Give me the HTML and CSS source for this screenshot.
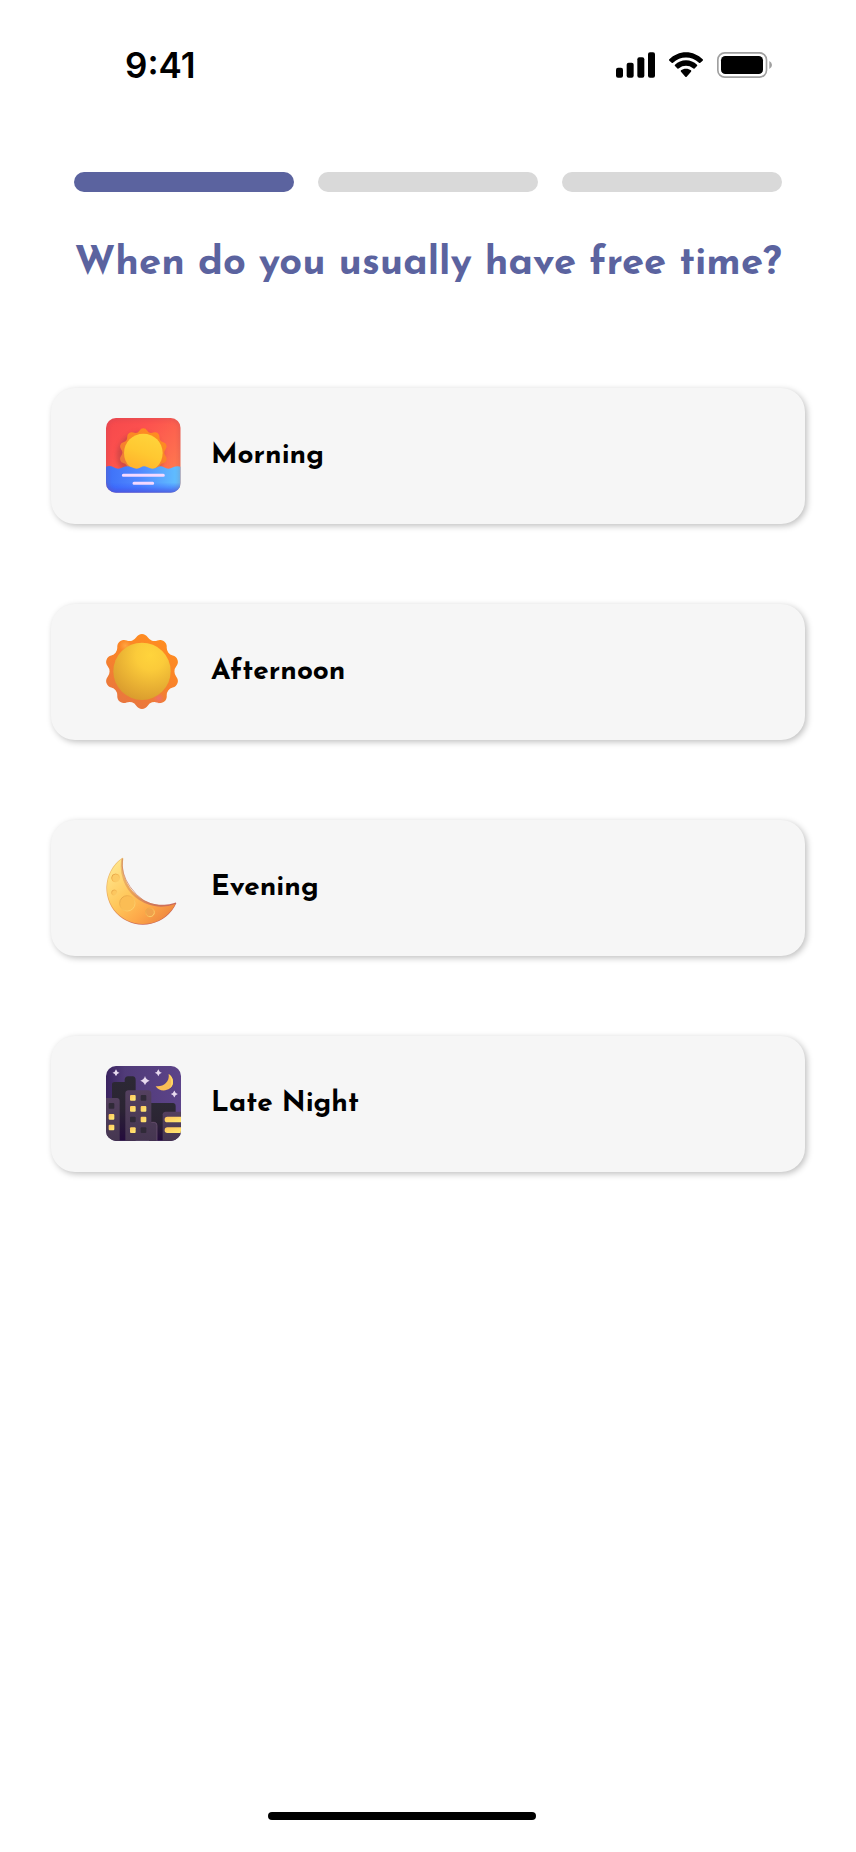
FILE: index.html
```html
<!DOCTYPE html>
<html lang="en">
<head>
<meta charset="utf-8">
<meta name="viewport" content="width=device-width, initial-scale=1">
<title>Free time</title>
<link rel="stylesheet" href="styles.css">
</head>
<body>
<div class="screen">
  <header class="status">
    <time class="clock">9:41</time>
    <div class="indicators">
      <svg class="signal" viewBox="78 66 117 78" aria-hidden="true">
        <rect x="78" y="113" width="21" height="30" rx="6"/>
        <rect x="110" y="98" width="21" height="45" rx="6"/>
        <rect x="142" y="82" width="21" height="61" rx="6"/>
        <rect x="174" y="67" width="21" height="76" rx="6"/>
      </svg>
      <svg class="wifi" viewBox="237 66 102 78" aria-hidden="true">
        <path d="M288 67C307 67 325 75 338 88Q340 90 338 92L331 98Q329 100 327 98C305 77 271 77 249 98Q247 100 245 98L238 92Q236 90 238 88C251 75 269 67 288 67Z"/>
        <path d="M288 91C301 91 312 96 321 104Q323 106 321 108L313 116Q311 117 309 115C297 105 279 105 267 115Q265 117 263 116L255 108Q253 106 255 104C264 96 275 91 288 91Z"/>
        <path d="M288 116C294 116 299 118 303 121Q305 123 303 125L290 140Q288 142 286 140L273 125Q271 123 273 121C277 118 282 116 288 116Z"/>
      </svg>
      <svg class="battery" viewBox="381 66 165 78" aria-hidden="true">
        <rect x="383.500" y="68.500" width="146" height="73" rx="21" fill="none" stroke="#a0a0a0" stroke-width="5"/>
        <rect x="393" y="78" width="126" height="54" rx="13"/>
        <path d="M538 93Q546 97 546 105T538 117Z" fill="#a0a0a0"/>
      </svg>
    </div>
  </header>

  <main class="content">
    <ol class="progress" aria-label="Step 1 of 3">
      <li class="step step-done"></li>
      <li class="step"></li>
      <li class="step"></li>
    </ol>
    <h1 class="title">When do you usually have free time?</h1>

    <div class="options">
      <button class="option" type="button">
        <svg class="icon" viewBox="47 54 225 225" aria-hidden="true">
          <defs>
            <linearGradient id="sky" x1="0" y1="0" x2="1" y2="1"><stop offset="0" stop-color="#f5484c"/><stop offset=".3" stop-color="#fc504e"/><stop offset="1" stop-color="#ff8750"/></linearGradient>
            <linearGradient id="sea" x1="0" y1="0" x2="1" y2="0"><stop offset="0" stop-color="#3d70f8"/><stop offset=".45" stop-color="#5088ff"/><stop offset="1" stop-color="#62c4ff"/></linearGradient>
            <linearGradient id="seaDepth" x1="0" y1="0" x2="0" y2="1"><stop offset=".6" stop-color="#3558ff" stop-opacity="0"/><stop offset="1" stop-color="#3558ff" stop-opacity=".8"/></linearGradient>
            <linearGradient id="dawnDisc" x1=".7" y1="0" x2=".3" y2="1"><stop offset="0" stop-color="#ffd43b"/><stop offset=".5" stop-color="#ffc831"/><stop offset="1" stop-color="#ffae2b"/></linearGradient>
            <linearGradient id="rays" x1=".7" y1="0" x2=".2" y2="1"><stop offset="0" stop-color="#ff8d20"/><stop offset=".4" stop-color="#fa8428"/><stop offset="1" stop-color="#e67442"/></linearGradient>
            <clipPath id="dawnClip"><rect x="47" y="54" width="224" height="224" rx="30"/></clipPath>
            <filter id="soft" x="-30%" y="-30%" width="160%" height="160%"><feGaussianBlur stdDeviation="7"/></filter>
            <path id="rayShape" d="M-17.200-102.600A20.200 20.200 0 0 1 17.200-102.600A24 24 0 0 0 46.400-93.100A20.200 20.200 0 0 1 74.200-72.900A24 24 0 0 0 92.200-48A20.200 20.200 0 0 1 102.900-15.400A24 24 0 0 0 102.900 15.400A20.200 20.200 0 0 1 92.200 48A24 24 0 0 0 74.200 72.900A20.200 20.200 0 0 1 46.400 93.100A24 24 0 0 0 17.200 102.600A20.200 20.200 0 0 1-17.200 102.600A24 24 0 0 0-46.400 93.100A20.200 20.200 0 0 1-74.200 72.900A24 24 0 0 0-92.200 48A20.200 20.200 0 0 1-102.900 15.400A24 24 0 0 0-102.900-15.400A20.200 20.200 0 0 1-92.200-48A24 24 0 0 0-74.200-72.900A20.200 20.200 0 0 1-46.400-93.100A24 24 0 0 0-17.200-102.600Z"/>
          </defs>
          <g clip-path="url(#dawnClip)">
            <rect x="47" y="54" width="224" height="224" fill="url(#sky)"/>
            <circle cx="150" cy="166" r="70" fill="#b83f42" opacity=".6" filter="url(#soft)"/>
            <use href="#rayShape" transform="translate(159 158) scale(.65)" fill="url(#rays)"/>
            <circle cx="159" cy="159" r="58" fill="url(#dawnDisc)"/>
            <path d="M47 200Q58 195 70 202Q83 210 98 202Q110 195 124 202Q140 210 152 202Q160 196 172 202Q187 210 201 202Q210 196 221 202Q234 210 248 202Q260 196 271 200V278H47Z" fill="url(#sea)"/>
            <path d="M47 202H271V278H47Z" fill="url(#seaDepth)"/>
            <rect x="47" y="54" width="224" height="224" rx="30" fill="none" stroke="#a14462" stroke-width="8" opacity=".35" filter="url(#soft)"/>
            <path d="M99 226H219M131 250H187" stroke="#f4d8ff" stroke-width="9" stroke-linecap="round"/>
          </g>
        </svg>
        <span class="label">Morning</span>
      </button>

      <button class="option" type="button">
        <svg class="icon" viewBox="32 43 225 225" aria-hidden="true">
          <defs>
            <radialGradient id="noonDisc" cx=".65" cy=".22" r=".85"><stop offset="0" stop-color="#ffd43c"/><stop offset=".3" stop-color="#fbcb3a"/><stop offset="1" stop-color="#d8992d"/></radialGradient>
            <radialGradient id="pink" cx=".5" cy=".5" r=".5"><stop offset="0" stop-color="#f0706a"/><stop offset="1" stop-color="#f0706a" stop-opacity="0"/></radialGradient>
            <radialGradient id="glow" cx=".5" cy=".5" r=".5"><stop offset="0" stop-color="#ffa540"/><stop offset="1" stop-color="#ffa540" stop-opacity="0"/></radialGradient>
          </defs>
          <use href="#rayShape" transform="translate(140 155.500)" fill="url(#rays)"/>
          <circle cx="90" cy="78" r="18" fill="url(#glow)"/>
          <circle cx="190" cy="236" r="17" fill="url(#pink)"/>
          <circle cx="140" cy="155" r="86" fill="url(#noonDisc)"/>
        </svg>
        <span class="label">Afternoon</span>
      </button>

      <button class="option" type="button">
        <svg class="icon" viewBox="32 30 225 225" aria-hidden="true">
          <defs>
            <linearGradient id="moon" x1=".1" y1=".1" x2=".85" y2=".9"><stop offset="0" stop-color="#ffe489"/><stop offset=".45" stop-color="#ffc659"/><stop offset=".75" stop-color="#fda849"/><stop offset="1" stop-color="#f08a40"/></linearGradient>
            <linearGradient id="moonEdge" x1="0" y1=".2" x2=".5" y2="1"><stop offset="0" stop-color="#eec070"/><stop offset=".5" stop-color="#e9a057"/><stop offset="1" stop-color="#c9675a"/></linearGradient>
            <linearGradient id="crater" x1="0" y1="0" x2="1" y2="1"><stop offset="0" stop-color="#e0a046"/><stop offset=".4" stop-color="#f4b650"/><stop offset="1" stop-color="#ffd876"/></linearGradient>
          </defs>
          <path d="M80 54A110 110 0 1 0 243 190Q242 186 237 189A119 119 0 0 1 84 56Q83 51 80 54Z" fill="url(#moonEdge)"/>
          <path d="M78 58A108 108 0 1 0 240 192A121 121 0 0 1 78 58Z" fill="url(#moon)"/>
          <path d="M81 56Q76 100 104 140Q141 194 195 197" fill="none" stroke="#c8745b" stroke-width="3" opacity=".65"/>
          <g fill="#fbbd54" stroke="url(#crater)" stroke-width="3">
            <circle cx="96" cy="190" r="23"/><circle cx="61" cy="114" r="12" fill="#fccb66"/>
            <circle cx="57" cy="158" r="8" fill="#fcc75f"/><circle cx="164" cy="217" r="13" fill="#f0a24c"/>
          </g>
        </svg>
        <span class="label">Evening</span>
      </button>

      <button class="option" type="button">
        <svg class="icon" viewBox="31 33 225 225" aria-hidden="true">
          <defs>
            <linearGradient id="night" x1="0" y1="0" x2="1" y2="0"><stop offset="0" stop-color="#3a2360"/><stop offset=".25" stop-color="#503b78"/><stop offset="1" stop-color="#5c4389"/></linearGradient>
            <linearGradient id="tower" x1="0" y1="0" x2="0" y2="1"><stop offset="0" stop-color="#54405f"/><stop offset="1" stop-color="#453650"/></linearGradient>
            <linearGradient id="back" x1="0" y1="0" x2="0" y2="1"><stop offset="0" stop-color="#2c2935"/><stop offset=".5" stop-color="#2b2433"/><stop offset="1" stop-color="#240b3d"/></linearGradient>
            <linearGradient id="lamp" x1="0" y1="0" x2="1" y2="1"><stop offset="0" stop-color="#ffc45c"/><stop offset="1" stop-color="#ffed75"/></linearGradient>
            <clipPath id="nightClip"><rect x="31" y="33" width="225" height="224" rx="30"/></clipPath>
            <path id="star" d="M0-14Q3-3 14 0Q3 3 0 14Q-3 3-14 0Q-3-3 0-14Z"/>
          </defs>
          <g clip-path="url(#nightClip)">
            <rect x="31" y="33" width="225" height="225" fill="url(#night)"/>
            <path d="M49 258V88Q49 81 57 81H87V73Q89 64 97 64H111Q120 65 120 75V258Z" fill="url(#back)"/>
            <path d="M160 258V144H232Q240 145 240 153V258Z" fill="url(#back)"/>
            <path d="M31 129H64Q72 130 72 138V258H31Z" fill="url(#tower)"/>
            <path d="M89 258V114Q90 106 98 106H158Q167 107 167 115V202H176Q184 203 184 211V258Z" fill="url(#tower)"/>
            <path d="M201 258V178Q202 170 210 170H256V258Z" fill="url(#tower)"/>
            <path d="M167 202H176Q184 203 184 211V258" fill="none" stroke="#725878" stroke-width="2"/>
            <g fill="url(#lamp)">
              <rect x="103" y="120" width="17" height="17" rx="3"/><rect x="103" y="153" width="17" height="17" rx="3"/>
              <rect x="135" y="153" width="17" height="17" rx="3"/><rect x="135" y="185" width="17" height="17" rx="3"/>
              <rect x="103" y="217" width="17" height="17" rx="3"/><rect x="39" y="177" width="17" height="17" rx="3"/>
              <rect x="39" y="209" width="17" height="17" rx="3"/>
              <rect x="207" y="185" width="60" height="17" rx="8"/><rect x="207" y="217" width="60" height="17" rx="8"/>
            </g>
            <g fill="#302a38">
              <rect x="135" y="120" width="17" height="17" rx="3"/><rect x="103" y="185" width="17" height="17" rx="3"/>
              <rect x="135" y="217" width="17" height="17" rx="3"/><rect x="39" y="144" width="17" height="17" rx="3"/>
            </g>
            <g fill="#e8daef">
              <use href="#star" transform="translate(148 77)"/>
              <use href="#star" transform="translate(61 53) scale(.75)"/>
              <use href="#star" transform="translate(188 53) scale(.75)"/>
              <use href="#star" transform="translate(236 117) scale(.75)"/>
            </g>
            <path d="M219 57C235 68 237 89 223 100C208 111 187 107 180 93C199 97 223 83 219 57Z" fill="#f9bd55"/>
            <path d="M219 57C235 68 237 89 223 100C230 82 226 70 219 57Z" fill="#ffd765"/>
          </g>
        </svg>
        <span class="label">Late Night</span>
      </button>
    </div>
  </main>

  <footer class="home"><div class="home-bar"></div></footer>
</div>
</body>
</html>
```

FILE: styles.css
```css
* { box-sizing: border-box; }

body {
  margin: 0;
  background: #fff;
  color: #000;
  font-family: "Josefin Sans", Lato, sans-serif;
}

.screen {
  display: flex;
  flex-direction: column;
  min-height: 100vh;
}

.status {
  display: flex;
  justify-content: space-between;
  align-items: center;
  padding: 52px 84px 0 125px;
}

.clock {
  font: 600 35px/26px Inter, sans-serif;
}

.indicators {
  display: flex;
  gap: 14px;
}

.indicators svg { display: block; height: 26px; }
.signal { width: 39px; }
.wifi { width: 34px; }
.battery { width: 55px; }

.content {
  flex: 1;
  padding: 94px 51px 0;
}

.progress {
  display: flex;
  gap: 24px;
  margin: 0;
  padding: 0 23px;
  list-style: none;
}

.step {
  flex: 1;
  height: 20px;
  border-radius: 10px;
  background: #d9d9d9;
}

.step-done { background: #5b639f; }

.title {
  margin: 48px 0 0;
  color: #5b639f;
  font-size: 40px;
  font-weight: 700;
  line-height: 48px;
  text-align: center;
}

.options {
  display: flex;
  flex-direction: column;
  gap: 80px;
  margin-top: 100px;
}

.option {
  display: flex;
  align-items: center;
  gap: 30px;
  min-height: 136px;
  padding: 30px 55px 31px;
  border: 0;
  border-radius: 24px;
  background: #f6f6f6;
  box-shadow: 2px 2px 6px rgba(0, 0, 0, .25);
  color: #000;
  font: inherit;
  text-align: left;
}

.icon {
  flex: none;
  width: 75px;
  height: 75px;
}

.label {
  font-size: 28px;
  font-weight: 700;
  line-height: 32px;
}

.home { padding: 0 320px 32px 268px; }

.home-bar {
  height: 8px;
  border-radius: 4px;
  background: #000;
}
```
